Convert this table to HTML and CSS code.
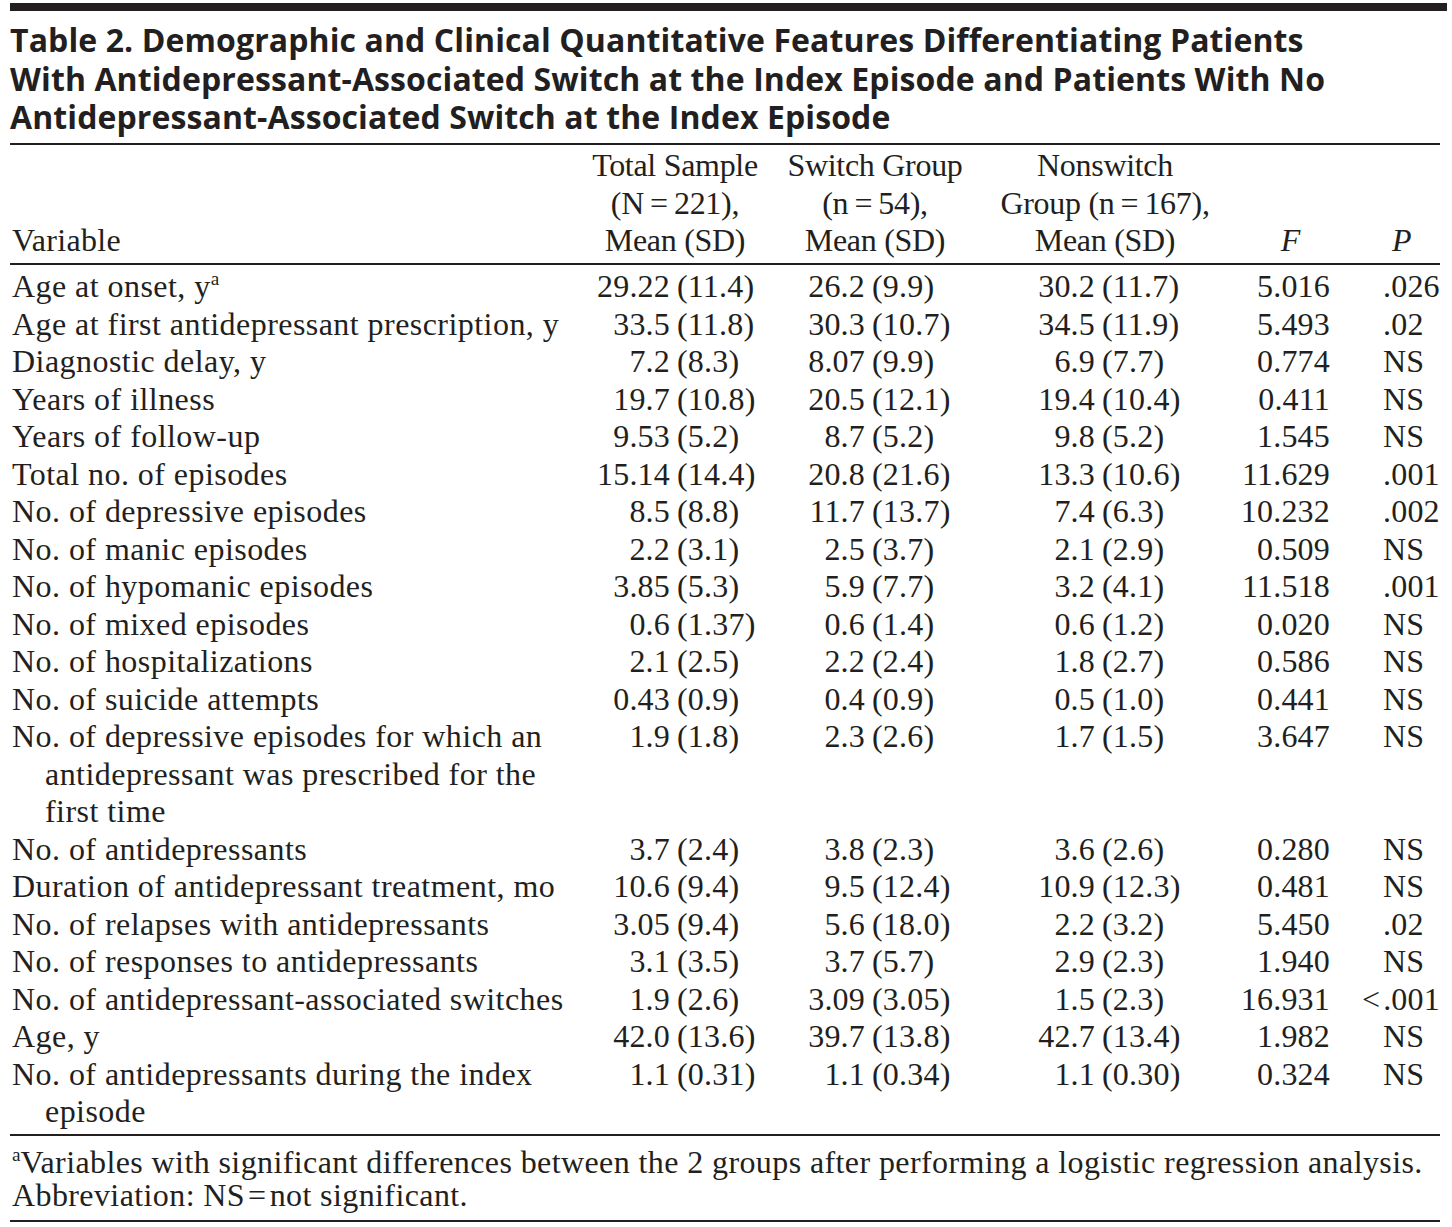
FILE: index.html
```html
<!DOCTYPE html>
<html lang="en">
<head>
<meta charset="utf-8">
<title>Table 2</title>
<link rel="stylesheet" href="styles.css">
</head>
<body>
<div class="page">
  <div class="topbar"></div>
  <h1 class="title">Table 2. Demographic and Clinical Quantitative Features Differentiating Patients<br>With Antidepressant-Associated Switch at the Index Episode and Patients With No<br>Antidepressant-Associated Switch at the Index Episode</h1>
  <table class="data">
    <colgroup>
      <col class="c-var"><col class="c-m1"><col class="c-s1"><col class="c-m2"><col class="c-s2"><col class="c-m3"><col class="c-s3"><col class="c-f"><col class="c-p">
    </colgroup>
    <thead>
      <tr>
        <th class="h-var">Variable</th>
        <th colspan="2" class="h-grp">Total Sample<br>(N&#8201;=&#8201;221),<br>Mean (SD)</th>
        <th colspan="2" class="h-grp">Switch Group<br>(n&#8201;=&#8201;54),<br>Mean (SD)</th>
        <th colspan="2" class="h-grp">Nonswitch<br>Group (n&#8201;=&#8201;167),<br>Mean (SD)</th>
        <th class="h-f"><i>F</i></th>
        <th class="h-p"><i>P</i></th>
      </tr>
    </thead>
    <tbody>
      <tr><td class="var">Age at onset, y<span class="sup">a</span></td><td class="m">29.22</td><td class="s">(11.4)</td><td class="m">26.2</td><td class="s">(9.9)</td><td class="m">30.2</td><td class="s">(11.7)</td><td class="f">5.016</td><td class="p">.026</td></tr>
      <tr><td class="var">Age at first antidepressant prescription, y</td><td class="m">33.5</td><td class="s">(11.8)</td><td class="m">30.3</td><td class="s">(10.7)</td><td class="m">34.5</td><td class="s">(11.9)</td><td class="f">5.493</td><td class="p">.02</td></tr>
      <tr><td class="var">Diagnostic delay, y</td><td class="m">7.2</td><td class="s">(8.3)</td><td class="m">8.07</td><td class="s">(9.9)</td><td class="m">6.9</td><td class="s">(7.7)</td><td class="f">0.774</td><td class="p">NS</td></tr>
      <tr><td class="var">Years of illness</td><td class="m">19.7</td><td class="s">(10.8)</td><td class="m">20.5</td><td class="s">(12.1)</td><td class="m">19.4</td><td class="s">(10.4)</td><td class="f">0.411</td><td class="p">NS</td></tr>
      <tr><td class="var">Years of follow-up</td><td class="m">9.53</td><td class="s">(5.2)</td><td class="m">8.7</td><td class="s">(5.2)</td><td class="m">9.8</td><td class="s">(5.2)</td><td class="f">1.545</td><td class="p">NS</td></tr>
      <tr><td class="var">Total no. of episodes</td><td class="m">15.14</td><td class="s">(14.4)</td><td class="m">20.8</td><td class="s">(21.6)</td><td class="m">13.3</td><td class="s">(10.6)</td><td class="f">11.629</td><td class="p">.001</td></tr>
      <tr><td class="var">No. of depressive episodes</td><td class="m">8.5</td><td class="s">(8.8)</td><td class="m">11.7</td><td class="s">(13.7)</td><td class="m">7.4</td><td class="s">(6.3)</td><td class="f">10.232</td><td class="p">.002</td></tr>
      <tr><td class="var">No. of manic episodes</td><td class="m">2.2</td><td class="s">(3.1)</td><td class="m">2.5</td><td class="s">(3.7)</td><td class="m">2.1</td><td class="s">(2.9)</td><td class="f">0.509</td><td class="p">NS</td></tr>
      <tr><td class="var">No. of hypomanic episodes</td><td class="m">3.85</td><td class="s">(5.3)</td><td class="m">5.9</td><td class="s">(7.7)</td><td class="m">3.2</td><td class="s">(4.1)</td><td class="f">11.518</td><td class="p">.001</td></tr>
      <tr><td class="var">No. of mixed episodes</td><td class="m">0.6</td><td class="s">(1.37)</td><td class="m">0.6</td><td class="s">(1.4)</td><td class="m">0.6</td><td class="s">(1.2)</td><td class="f">0.020</td><td class="p">NS</td></tr>
      <tr><td class="var">No. of hospitalizations</td><td class="m">2.1</td><td class="s">(2.5)</td><td class="m">2.2</td><td class="s">(2.4)</td><td class="m">1.8</td><td class="s">(2.7)</td><td class="f">0.586</td><td class="p">NS</td></tr>
      <tr><td class="var">No. of suicide attempts</td><td class="m">0.43</td><td class="s">(0.9)</td><td class="m">0.4</td><td class="s">(0.9)</td><td class="m">0.5</td><td class="s">(1.0)</td><td class="f">0.441</td><td class="p">NS</td></tr>
      <tr><td class="var">No. of depressive episodes for which an<br>antidepressant was prescribed for the<br>first time</td><td class="m">1.9</td><td class="s">(1.8)</td><td class="m">2.3</td><td class="s">(2.6)</td><td class="m">1.7</td><td class="s">(1.5)</td><td class="f">3.647</td><td class="p">NS</td></tr>
      <tr><td class="var">No. of antidepressants</td><td class="m">3.7</td><td class="s">(2.4)</td><td class="m">3.8</td><td class="s">(2.3)</td><td class="m">3.6</td><td class="s">(2.6)</td><td class="f">0.280</td><td class="p">NS</td></tr>
      <tr><td class="var">Duration of antidepressant treatment, mo</td><td class="m">10.6</td><td class="s">(9.4)</td><td class="m">9.5</td><td class="s">(12.4)</td><td class="m">10.9</td><td class="s">(12.3)</td><td class="f">0.481</td><td class="p">NS</td></tr>
      <tr><td class="var">No. of relapses with antidepressants</td><td class="m">3.05</td><td class="s">(9.4)</td><td class="m">5.6</td><td class="s">(18.0)</td><td class="m">2.2</td><td class="s">(3.2)</td><td class="f">5.450</td><td class="p">.02</td></tr>
      <tr><td class="var">No. of responses to antidepressants</td><td class="m">3.1</td><td class="s">(3.5)</td><td class="m">3.7</td><td class="s">(5.7)</td><td class="m">2.9</td><td class="s">(2.3)</td><td class="f">1.940</td><td class="p">NS</td></tr>
      <tr><td class="var">No. of antidepressant-associated switches</td><td class="m">1.9</td><td class="s">(2.6)</td><td class="m">3.09</td><td class="s">(3.05)</td><td class="m">1.5</td><td class="s">(2.3)</td><td class="f">16.931</td><td class="p"><span class="lt">&lt;&#8202;</span>.001</td></tr>
      <tr><td class="var">Age, y</td><td class="m">42.0</td><td class="s">(13.6)</td><td class="m">39.7</td><td class="s">(13.8)</td><td class="m">42.7</td><td class="s">(13.4)</td><td class="f">1.982</td><td class="p">NS</td></tr>
      <tr><td class="var">No. of antidepressants during the index<br>episode</td><td class="m">1.1</td><td class="s">(0.31)</td><td class="m">1.1</td><td class="s">(0.34)</td><td class="m">1.1</td><td class="s">(0.30)</td><td class="f">0.324</td><td class="p">NS</td></tr>
    </tbody>
  </table>
  <div class="notes">
    <p class="note"><span class="sup">a</span>Variables with significant differences between the 2 groups after performing a logistic regression analysis.</p>
    <p class="note">Abbreviation: NS&#8202;=&#8202;not significant.</p>
  </div>
</div>
</body>
</html>
```

FILE: styles.css
```css
html, body {
  margin: 0;
  padding: 0;
  background: #ffffff;
}

body {
  color: #231f20;
  font-family: "Liberation Serif", "Times New Roman", serif;
}

.page {
  width: 1430px;
  padding: 3px 12px 0 10px;
}

.topbar {
  height: 8px;
  background: #231f20;
  margin-right: -7px;
}

.title {
  margin: 10px 0 0;
  padding-bottom: 6.5px;
  border-bottom: 2px solid #231f20;
  font-family: "Open Sans", "Liberation Sans", sans-serif;
  font-weight: 700;
  font-size: 32px;
  line-height: 38.5px;
  letter-spacing: 0.1px;
  white-space: nowrap;
}

.data {
  width: 1430px;
  table-layout: fixed;
  border-collapse: collapse;
  border-spacing: 0;
  font-size: 32px;
  line-height: 37.5px;
}

.c-var { width: 570px; }
.c-m1 { width: 90px; }
.c-s1 { width: 100px; }
.c-m2 { width: 95px; }
.c-s2 { width: 115px; }
.c-m3 { width: 115px; }
.c-s3 { width: 135px; }
.c-f { width: 110px; }
.c-p { width: 100px; }

.data th {
  font-weight: 400;
  vertical-align: bottom;
  padding: 2px 0 3px;
  border-bottom: 2px solid #231f20;
  letter-spacing: -0.3px;
  white-space: nowrap;
}

.data .h-var {
  text-align: left;
  padding-left: 2px;
  letter-spacing: 0.3px;
}

.data .h-grp {
  text-align: center;
}

.data .h-f {
  text-align: right;
  padding-right: 40px;
}

.data .h-p {
  text-align: left;
  padding-left: 52px;
}

.data td {
  padding: 0;
  vertical-align: top;
  letter-spacing: 0.35px;
  white-space: nowrap;
}

.data tbody tr:first-child td {
  padding-top: 3.5px;
}

.data tbody tr:last-child td {
  padding-bottom: 3px;
  border-bottom: 2px solid #231f20;
}

.data .var {
  padding-left: 35px;
  text-indent: -33px;
  letter-spacing: 0.45px;
}

.data .m {
  text-align: right;
  letter-spacing: 0.2px;
}

.data .s {
  text-align: left;
  padding-left: 7px;
  letter-spacing: 0.2px;
}

.data .f {
  text-align: right;
  padding-right: 10px;
  letter-spacing: 0.2px;
}

.data .p {
  text-align: left;
  padding-left: 43px;
  letter-spacing: 0.2px;
}

.lt {
  margin-left: -21px;
}

.sup {
  font-size: 0.6em;
  vertical-align: 0.65em;
  line-height: 0;
  letter-spacing: 0;
}

.notes {
  padding: 10px 0 8px;
  border-bottom: 2px solid #231f20;
}

.note {
  margin: 0;
  padding-left: 2px;
  font-size: 32px;
  line-height: 33px;
  letter-spacing: 0.4px;
  white-space: nowrap;
}
```
